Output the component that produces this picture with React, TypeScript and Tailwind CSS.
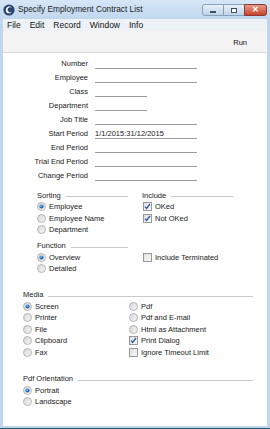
import React from "react";

const font = { fontFamily: '"Liberation Sans", Arial, sans-serif' };

function Radio({ checked }: { checked?: boolean }) {
  return (
    <svg width="9" height="9" viewBox="0 0 9 9" className="shrink-0">
      <defs>
        <linearGradient id="rg" x1="0" y1="0" x2="1" y2="1">
          <stop offset="0" stopColor="#d8d8d8" />
          <stop offset="1" stopColor="#f6f6f6" />
        </linearGradient>
        <radialGradient id="rd" cx="0.4" cy="0.35" r="0.7">
          <stop offset="0" stopColor="#7fb6ea" />
          <stop offset="0.6" stopColor="#2a6fc4" />
          <stop offset="1" stopColor="#17468a" />
        </radialGradient>
      </defs>
      <circle cx="4.5" cy="4.5" r="4" fill="url(#rg)" stroke="#a4a4a4" strokeWidth="0.8" />
      {checked && <circle cx="4.5" cy="4.5" r="2.1" fill="url(#rd)" />}
    </svg>
  );
}

function Check({ checked }: { checked?: boolean }) {
  return (
    <svg width="9" height="9" viewBox="0 0 9 9" className="shrink-0">
      <defs>
        <linearGradient id="cg" x1="0" y1="0" x2="1" y2="1">
          <stop offset="0" stopColor="#dedede" />
          <stop offset="1" stopColor="#fafafa" />
        </linearGradient>
      </defs>
      <rect x="0.5" y="0.5" width="8" height="8" fill="url(#cg)" stroke="#8e8f8f" strokeWidth="0.9" />
      {checked && (
        <path d="M2 4.6 L3.6 6.4 L7 2" fill="none" stroke="#2f58a8" strokeWidth="1.3" />
      )}
    </svg>
  );
}

function Item({ type, checked, label }: { type: "r" | "c"; checked?: boolean; label: string }) {
  return (
    <div className="flex h-[11.5px] items-center gap-[2px] text-[7.5px] leading-none text-[#1a1a1a]">
      {type === "r" ? <Radio checked={checked} /> : <Check checked={checked} />}
      <span className="ml-[1px]">{label}</span>
    </div>
  );
}

function Header({ label, className }: { label: string; className?: string }) {
  return (
    <div className={"flex h-[11px] items-center text-[7.5px] leading-none text-[#1a1a1a] " + (className || "")}>
      <span>{label}</span>
      <div className="ml-[5px] mt-[2px] h-px flex-1 bg-[#c9c9c9]" />
    </div>
  );
}

function Row({ label, short, value }: { label: string; short?: boolean; value?: string }) {
  return (
    <div className="flex h-[14px] items-start">
      <div className="w-[85px] text-right text-[7.5px] leading-[14px] text-[#1a1a1a]">{label}</div>
      <div
        className={
          "ml-[7px] h-[12px] border-b border-[#9c9c9c] text-[7.5px] leading-[14px] text-[#1a1a1a] " +
          (short ? "w-[52px]" : "w-[102px]")
        }
      >
        {value}
      </div>
    </div>
  );
}

export default function App() {
  return (
    <div style={font} className="flex h-[429px] w-[270px] flex-col overflow-hidden bg-[#bfd6ee]">
      {/* title bar */}
      <div className="flex h-[19px] shrink-0 items-center bg-gradient-to-b from-[#d6e6f6] to-[#c0d7ee] pl-[3px]">
        <svg width="12" height="12" viewBox="0 0 12 12" className="shrink-0">
          <circle cx="6" cy="6" r="5.6" fill="#2d4572" />
          <path d="M3.2 4.2 C4.2 2.2 7.6 2 8.8 3.6 C7.2 3 5.2 3.6 4.6 5.2 C4.2 6.6 5.6 8.6 8.6 8.4 C7 10 3.6 9.6 3 7.4 C2.7 6.3 2.8 5 3.2 4.2 Z" fill="#ffffff" />
        </svg>
        <span className="ml-[3px] text-[8.3px] leading-none text-[#1b1b1b]">Specify Employment Contract List</span>
        <div className="ml-auto mr-[3px] mt-[1px] flex h-[12px] items-stretch">
          <div className="flex w-[22px] items-center justify-center rounded-l-[3px] border border-[#8aa1bb] bg-gradient-to-b from-[#e9f0f8] to-[#c2d4e8]">
            <div className="mt-[3px] h-[2px] w-[6px] border border-[#3d4f66] bg-white" />
          </div>
          <div className="-ml-px flex w-[22px] items-center justify-center border border-[#8aa1bb] bg-gradient-to-b from-[#e9f0f8] to-[#c2d4e8]">
            <div className="h-[5px] w-[6px] border border-[#3d4f66] bg-white" />
          </div>
          <div className="-ml-px flex w-[23px] items-center justify-center rounded-r-[3px] border border-[#8a3a2e] bg-gradient-to-b from-[#e59a89] to-[#c4412c]">
            <span className="text-[8px] font-bold leading-none text-white">✕</span>
          </div>
        </div>
      </div>
      {/* body frame */}
      <div className="flex flex-1 flex-col px-[3px] pb-[2px]">
        {/* menu */}
        <div className="flex h-[12px] shrink-0 items-center gap-[9px] bg-[#eef1f6] pl-[4px] text-[8.5px] leading-none text-[#111]">
          <span>File</span>
          <span>Edit</span>
          <span>Record</span>
          <span>Window</span>
          <span>Info</span>
        </div>
        {/* toolbar */}
        <div className="flex h-[22px] shrink-0 items-center justify-end border-b border-[#dadada] bg-[#f3f3f3] pr-[20px] text-[7.5px] leading-none text-[#111]">
          <span className="mt-[2px]">Run</span>
        </div>
        {/* content */}
        <div className="flex flex-1 flex-col bg-white pt-[4px]">
          <Row label="Number" />
          <Row label="Employee" />
          <Row label="Class" short />
          <Row label="Department" short />
          <Row label="Job Title" />
          <Row label="Start Period" value="1/1/2015:31/12/2015" />
          <Row label="End Period" />
          <Row label="Trial End Period" />
          <Row label="Change Period" />

          <div className="mt-[7px] flex pl-[34px]">
            <div className="flex w-[91px] flex-col">
              <Header label="Sorting" />
              <Item type="r" checked label="Employee" />
              <Item type="r" label="Employee Name" />
              <Item type="r" label="Department" />
            </div>
            <div className="ml-[14px] flex w-[91px] flex-col">
              <Header label="Include" />
              <div className="pl-[1px]">
                <Item type="c" checked label="OKed" />
                <Item type="c" checked label="Not OKed" />
              </div>
            </div>
          </div>

          <div className="mt-[5px] flex pl-[34px]">
            <div className="flex w-[91px] flex-col">
              <Header label="Function" />
              <Item type="r" checked label="Overview" />
              <Item type="r" label="Detailed" />
            </div>
            <div className="ml-[15px] flex flex-col pt-[11px]">
              <Item type="c" label="Include Terminated" />
            </div>
          </div>

          <div className="mt-[15px] flex w-[250px] flex-col pl-[20px]">
            <Header label="Media" />
            <div className="flex">
              <div className="flex w-[106px] flex-col">
                <Item type="r" checked label="Screen" />
                <Item type="r" label="Printer" />
                <Item type="r" label="File" />
                <Item type="r" label="Clipboard" />
                <Item type="r" label="Fax" />
              </div>
              <div className="flex flex-col">
                <Item type="r" label="Pdf" />
                <Item type="r" label="Pdf and E-mail" />
                <Item type="r" label="Html as Attachment" />
                <Item type="c" checked label="Print Dialog" />
                <Item type="c" label="Ignore Timeout Limit" />
              </div>
            </div>
          </div>

          <div className="mt-[15.5px] flex w-[250px] flex-col pl-[20px]">
            <Header label="Pdf Orientation" />
            <Item type="r" checked label="Portrait" />
            <Item type="r" label="Landscape" />
          </div>
        </div>
      </div>
      <div className="h-[1px] shrink-0 bg-[#1e5a6e]" />
    </div>
  );
}
